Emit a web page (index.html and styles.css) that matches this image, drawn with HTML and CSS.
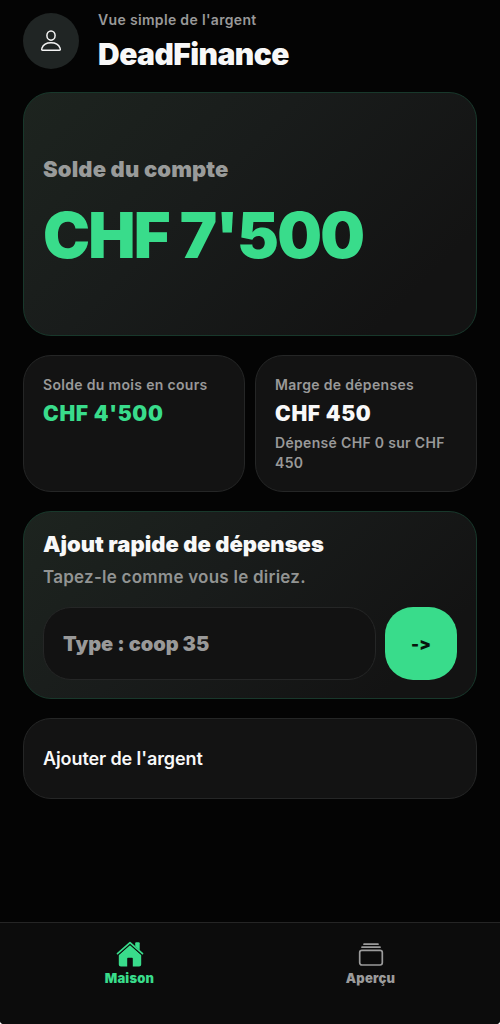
FILE: index.html
```html
<!DOCTYPE html>
<html lang="fr">
<head>
<meta charset="utf-8">
<title>DeadFinance</title>
<link rel="stylesheet" href="styles.css">
</head>
<body>
<div class="app">
  <header class="header">
    <div class="avatar">
      <svg width="20" height="22" viewBox="0 0 20 22" fill="none" stroke="#f4f4f4" stroke-width="1.5" stroke-linejoin="round">
        <ellipse cx="10" cy="5.6" rx="4.1" ry="4.6"/>
        <path d="M1.700 20.300C.7 20.300.5 19.300.9 18.300 2 15.300 5.300 12.800 10 12.800s8 2.500 9.100 5.500c.4 1 .2 2-.8 2z"/>
      </svg>
    </div>
    <div class="heading">
      <p class="tagline"><span>Vue simple de l'argent</span></p>
      <h1 class="title"><span>DeadFinance</span></h1>
    </div>
  </header>
  <main class="content">
    <section class="card glow balance">
      <p class="balance-label"><span>Solde du compte</span></p>
      <p class="balance-value"><span>CHF 7'500</span></p>
    </section>
    <div class="stats">
      <section class="card stat">
        <p class="small month"><span>Solde du mois en cours</span></p>
        <p class="stat-value green"><span>CHF 4'500</span></p>
      </section>
      <section class="card stat">
        <p class="small margin"><span>Marge de dépenses</span></p>
        <p class="stat-value"><span>CHF 450</span></p>
        <p class="small spent">Dépensé CHF 0 sur CHF 450</p>
      </section>
    </div>
    <section class="card glow quick">
      <h2 class="quick-title"><span>Ajout rapide de dépenses</span></h2>
      <p class="quick-hint"><span>Tapez-le comme vous le diriez.</span></p>
      <div class="entry">
        <div class="field"><span>Type : coop 35</span></div>
        <button class="send">-&gt;</button>
      </div>
    </section>
    <section class="card add"><span>Ajouter de l'argent</span></section>
  </main>
  <nav class="tabs">
    <a class="tab active">
      <svg width="28" height="27" viewBox="0 0 28 27" fill="#39dc8b">
        <path d="M14 5 25.200 15v9.400q0 2.100-2.100 2.100h-6.300v-8q0-.8-.8-.8h-4q-.8 0-.8.8v8H4.900q-2.100 0-2.100-2.100V15z"/>
        <path d="M1.500 13.700 14 2.600l12.500 11.100" fill="none" stroke="#0c0c0c" stroke-width="3.600" stroke-linecap="round"/>
        <path d="M19.200 3.200q0-1 1-1h2.500q1 0 1 1v7l-4.500-4z"/>
        <path d="M1.500 13.700 14 2.600l12.500 11.100" fill="none" stroke="#39dc8b" stroke-width="1.700" stroke-linecap="round" stroke-linejoin="round"/>
      </svg>
      <span>Maison</span>
    </a>
    <a class="tab">
      <svg width="28" height="27" viewBox="0 0 28 27" fill="none" stroke="#9b9b9b" stroke-width="1.700" stroke-linecap="round">
        <path d="M7 4.200h14M5 7.200h18"/>
        <rect x="2.700" y="10.300" width="22.600" height="14.700" rx="2.200"/>
      </svg>
      <span>Aperçu</span>
    </a>
  </nav>
</div>
</body>
</html>
```
FILE: styles.css
```css
* { box-sizing: border-box; }
html { background: #fff; }
body { margin: 0; font-family: Inter, "Liberation Sans", sans-serif; color: #f8f8f8; }
p, h1, h2 { margin: 0; white-space: nowrap; }
.app { width: 500px; height: 1024px; display: flex; flex-direction: column; background: #040404; border-radius: 0 0 4px 4px; overflow: hidden; }
.header { display: flex; gap: 19px; padding: 11px 23px 0; height: 92px; }
.avatar { width: 56px; height: 56px; margin-top: 2px; border-radius: 50%; background: #202524; display: flex; align-items: center; justify-content: center; }
.tagline { font-size: 14px; line-height: 18px; font-weight: 600; color: #999; letter-spacing: .33px; }
.title { font-size: 30px; line-height: 36px; margin-top: 7px; font-weight: 900; letter-spacing: -.55px; }
.content { flex: 1; padding: 0 23px; display: flex; flex-direction: column; gap: 19px; }
.card { border: 1px solid #252626; border-radius: 28px; background: #131313; }
.glow { border-color: #18382b; background: linear-gradient(135deg, #1d241f 0%, #191c1b 40%, #131313 85%); }
.balance { height: 244px; padding: 62px 19px 0; }
.balance-label { font-size: 22px; line-height: 28px; font-weight: 900; color: #999b9a; letter-spacing: .13px; }
.balance-value { font-size: 63px; line-height: 76px; margin-top: 14px; font-weight: 900; color: #39dc8b; letter-spacing: -1.75px; }
.stats { display: grid; grid-template-columns: 222px 222px; justify-content: space-between; height: 137px; }
.stat { padding: 19px 19px 0; }
.small { font-size: 14px; line-height: 20px; font-weight: 600; color: #999; letter-spacing: .32px; }
.stat-value { font-size: 21px; line-height: 28px; margin-top: 5px; font-weight: 900; letter-spacing: .7px; }
.green { color: #39dc8b; }
.spent { white-space: normal; margin-top: 5px; }
.quick { height: 188px; padding: 18px 19px 0 19px; }
.quick-title { font-size: 22px; line-height: 28px; font-weight: 900; letter-spacing: .02px; }
.quick-hint { font-size: 17px; line-height: 22px; margin-top: 8px; font-weight: 600; color: #929493; letter-spacing: .24px; }
.entry { display: flex; gap: 9px; margin-top: 19px; }
.field { flex: 1; height: 73px; border: 1px solid #252626; border-radius: 28px; background: #121212; padding-left: 19px; display: flex; align-items: center; font-size: 20px; font-weight: 900; color: #999; letter-spacing: 0; }
.send { width: 72px; height: 73px; border: 0; border-radius: 28px; background: #39dc8b; color: #07140d; font: 900 17px Inter, sans-serif; font-feature-settings: "calt" 0; padding: 0; }
.add { height: 81px; padding-left: 19px; display: flex; align-items: center; font-size: 18px; font-weight: 600; letter-spacing: -.1px; }
.tabs { height: 102px; border-top: 1px solid #252525; background: #0c0c0c; display: flex; padding: 17px 9px 0; }
.tab { flex: 1; display: flex; flex-direction: column; align-items: center; color: #9b9b9b; font-size: 13px; line-height: 18px; font-weight: 900; letter-spacing: .2px; gap: 2px; }
.active { color: #39dc8b; }
```
